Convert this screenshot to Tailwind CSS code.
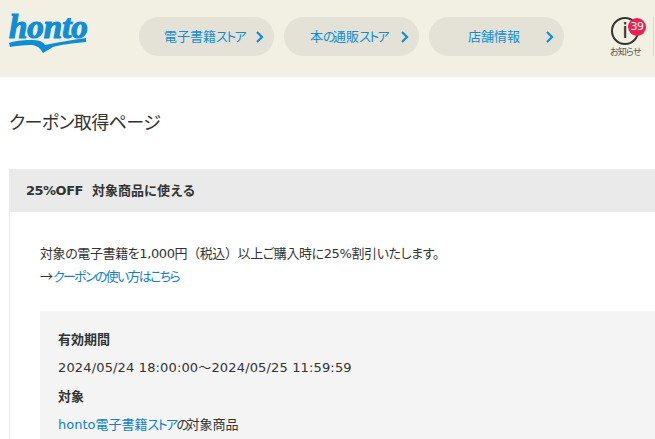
<!DOCTYPE html>
<html lang="ja">
<head>
  <meta charset="UTF-8" />
  <title>クーポン取得ページ</title>
  <script src="https://cdn.jsdelivr.net/npm/@tailwindcss/browser@4"></script>
</head>
<body class="h-[439px] overflow-hidden bg-white text-[#333] font-['DejaVu_Sans','Noto_Sans_CJK_JP',sans-serif] text-[13px] [font-feature-settings:'palt']">
  <!-- header -->
  <header class="flex h-[77px] bg-[#f2efe3]">
    <a class="relative block w-[139px] shrink-0">
      <span class="absolute left-[9px] top-[11px] font-['Liberation_Serif',serif] text-[33px] font-bold italic leading-[32px] text-[#0f8dd6] [-webkit-text-stroke:1.2px_#0f8dd6]">honto</span>
      <svg class="absolute left-[8px] top-[35px]" width="80" height="20" viewBox="0 0 80 20" fill="#0f8dd6">
        <path d="M1 8C9 5 25 4 32 6 35 7 36 9 37 10 50 7 64 5 78 3L78 7C65 8 52 10 45 12L35 18 33 15C31 12 27 10 22 10 14 10 8 11 2 12Z" />
      </svg>
    </a>
    <nav class="flex gap-[10px] pt-[17px]">
      <a class="flex h-[39px] w-[135px] items-center justify-between rounded-[20px] bg-[#e4e2d7] pl-[25px] pr-[10px] text-[#0f8dd6]">
        <span>電子書籍<span class="tracking-[-1.600px]">ストア</span></span>
        <svg width="8" height="12" viewBox="0 0 8 12" fill="none" stroke="#0f8dd6" stroke-width="2.200"><path d="M1 1l5 5-5 5" /></svg>
      </a>
      <a class="flex h-[39px] w-[135px] items-center justify-between rounded-[20px] bg-[#e4e2d7] pl-[26px] pr-[10px] text-[#0f8dd6]">
        <span>本<span class="tracking-[-2.500px]">の</span>通販<span class="tracking-[-1.600px]">ストア</span></span>
        <svg width="8" height="12" viewBox="0 0 8 12" fill="none" stroke="#0f8dd6" stroke-width="2.200"><path d="M1 1l5 5-5 5" /></svg>
      </a>
      <a class="flex h-[39px] w-[135px] items-center justify-between rounded-[20px] bg-[#e4e2d7] pl-[39px] pr-[10px] text-[#0f8dd6]">
        <span>店舗情報</span>
        <svg width="8" height="12" viewBox="0 0 8 12" fill="none" stroke="#0f8dd6" stroke-width="2.200"><path d="M1 1l5 5-5 5" /></svg>
      </a>
    </nav>
    <div class="relative ml-[47px] mt-[17px] h-[39px] w-[43px] border-r border-[#dcdad0]">
      <span class="absolute left-0 top-0 flex h-[28px] w-[28px] items-center justify-center rounded-full border-2 border-[#333] text-[22px] leading-none">i</span>
      <span class="absolute left-[17px] top-[1px] flex h-[18px] w-[18px] items-center justify-center rounded-full bg-[#ee1f50] text-[11px] tracking-[-0.500px] text-white">39</span>
      <span class="absolute left-[-1px] top-[30px] whitespace-nowrap text-[9px] leading-[10px] tracking-[-0.800px] text-[#555]">お知らせ</span>
    </div>
  </header>

  <main class="pl-[9px]">
    <h1 class="pt-[32px] text-[18px] font-normal leading-[28px] tracking-[-0.600px]">クーポン取得ページ</h1>
    <section class="mt-[32px] border-l border-[#eaeaea]">
      <h2 class="flex h-[43px] items-center bg-[#eaeaea] pl-[16px] text-[13px] font-bold [font-feature-settings:normal]"><span class="mr-[9px] tracking-[-0.500px]">25%OFF</span>対象商品に使える</h2>
      <div class="pl-[30px] pt-[31px]">
        <p class="leading-[22px] tracking-[-0.400px]">対象の電子書籍を1,000円<span class="[font-feature-settings:normal]">（税込）</span>以上ご購入時に25%割引いたします。</p>
        <p class="leading-[22px]"><span class="font-['Noto_Sans_CJK_JP',sans-serif] [font-feature-settings:normal]">→</span><a class="tracking-[-1.700px] text-[#0f7fd0]">クーポンの使い方はこちら</a></p>
        <dl class="mt-[23px] h-[140px] bg-[#f4f4f4] pl-[18px] pt-[19px]">
          <dt class="font-bold leading-[20px]">有効期間</dt>
          <dd class="mt-[8px] leading-[20px] tracking-[0.150px]">2024/05/24 18:00:00～2024/05/25 11:59:59</dd>
          <dt class="mt-[9px] font-bold leading-[20px]">対象</dt>
          <dd class="mt-[8px] leading-[20px]"><a class="text-[#0f7fd0]">honto電子書籍<span class="tracking-[-1.600px]">ストア</span></a><span class="tracking-[-2.500px]">の</span>対象商品</dd>
        </dl>
      </div>
    </section>
  </main>
</body>
</html>
